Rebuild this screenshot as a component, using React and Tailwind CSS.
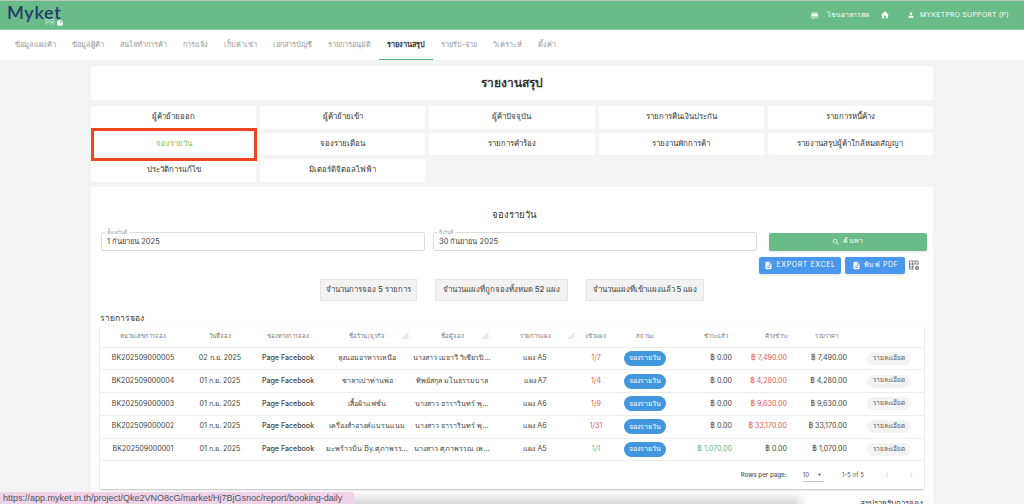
import { MdStore, MdHome, MdPerson, MdSearch, MdDescription, MdChevronLeft, MdChevronRight, MdArrowDropDown } from 'react-icons/md'

const tabs = ['ข้อมูลแผงค้า', 'ข้อมูลผู้ค้า', 'สนใจทำการค้า', 'การแจ้ง', 'เก็บค่าเช่า', 'เอกสารบัญชี', 'รายการอนุมัติ', 'รายงานสรุป', 'รายรับ-จ่าย', 'วิเคราะห์', 'ตั้งค่า']

const menu = [
  'ผู้ค้าย้ายออก', 'ผู้ค้าย้ายเข้า', 'ผู้ค้าปัจจุบัน', 'รายการคืนเงินประกัน', 'รายการหนี้ค้าง',
  'จองรายวัน', 'จองรายเดือน', 'รายการคำร้อง', 'รายงานพักการค้า', 'รายงานสรุปผู้ค้าใกล้หมดสัญญา',
  'ประวัติการแก้ไข', 'มิเตอร์ดิจิตอลไฟฟ้า',
]

const rows = [
  { id: 'BK202509000005', date: '02 ก.ย. 2025', shop: 'ลุงนอมอาหารเหนือ', name: 'นางสาว เมธาวี วิเชียรปิ...', zone: 'แผง A5', stall: '1/7', paid: '0.00', owing: '7,490.00', total: '7,490.00' },
  { id: 'BK202509000004', date: '01 ก.ย. 2025', shop: 'ชาลาเปาท่านพ่อ', name: 'ทิพย์สกุล มโนธรรมบาล', zone: 'แผง A7', stall: '1/4', paid: '0.00', owing: '4,280.00', total: '4,280.00' },
  { id: 'BK202509000003', date: '01 ก.ย. 2025', shop: 'เสื้อผ้าแฟชั่น', name: 'นางสาว ธารารินทร์ พุ...', zone: 'แผง A6', stall: '1/9', paid: '0.00', owing: '9,630.00', total: '9,630.00' },
  { id: 'BK202509000002', date: '01 ก.ย. 2025', shop: 'เครื่องสำอางค์แบรนแนม', name: 'นางสาว ธารารินทร์ พุ...', zone: 'แผง A6', stall: '1/31', paid: '0.00', owing: '33,170.00', total: '33,170.00' },
  { id: 'BK202509000001', date: '01 ก.ย. 2025', shop: 'มะพร้าวปั่น By.ศุภาพรร...', name: 'นางสาว ศุภาพรรณ เพ...', zone: 'แผง A5', stall: '1/1', paid: '1,070.00', owing: '0.00', total: '1,070.00', done: true },
]

const cols = 'grid grid-cols-[86px_68px_68px_90px_80px_86px_36px_62px_56px_60px_60px_72px] items-center'

function Resize() {
  return (
    <svg width="7" height="7" viewBox="0 0 7 7" className="absolute right-[3px] top-1/2 -translate-y-1/2 text-gray-400">
      <path d="M0.5 6.5 L6.5 0.5 M3.5 6.5 L6.5 3.5" stroke="currentColor" strokeWidth="0.6" fill="none" />
    </svg>
  )
}

function Field({ label, value }) {
  return (
    <div className="relative flex-1 h-[19px] border border-[#dcdcdc] rounded-[2px] bg-white flex items-center pl-[5px] pt-[2px] text-[7.5px] text-[#444]">
      <span className="absolute -top-[4px] left-[3px] bg-white px-[2px] text-[5px] leading-[6px] text-gray-400">{label}</span>
      {value}
    </div>
  )
}

export default function App() {
  return (
    <div className="h-[504px] overflow-hidden relative bg-[#f4f4f4] font-['Inter','Noto_Sans','Liberation_Sans',sans-serif]">
      {/* top bar */}
      <div className="h-[30px] bg-[#69bb88] border-t border-[#b5c9bc] border-b border-b-[#8fcba5] flex items-center justify-between pl-[7px] pr-[15px]">
        <div className="relative w-[60px] h-[28px]">
          <span className="absolute left-0 top-[2px] text-[18px] leading-[18px] tracking-[0.7px] font-semibold text-[#243a6b] font-['Lato',sans-serif]">Myket</span>
          <span className="absolute left-[38px] top-[18px] flex items-center gap-[2px] text-[7.5px] leading-[7px] text-[#c5e4cf]">
            PR
            <svg width="6" height="6" viewBox="0 0 6 6"><path d="M3 0 A3 3 0 1 0 6 3 L3 3 Z" fill="#fff" /><path d="M3.6 0 A2.6 2.6 0 0 1 6 2.4 L3.6 2.4 Z" fill="#fff" /></svg>
          </span>
        </div>
        <div className="flex items-center text-white text-[6.8px]">
          <MdStore size={9} />
          <span className="ml-[8px]">โชนอาหารสด</span>
          <MdHome size={10} className="ml-[11px]" />
          <MdPerson size={8} className="ml-[17px]" />
          <span className="ml-[5px] tracking-[0.3px]">MYKETPRO SUPPORT (P)</span>
        </div>
      </div>

      {/* tabs */}
      <div className="h-[30px] bg-white flex pl-[7px]">
        {tabs.map(t => (
          <div key={t} className={`h-[30px] px-[8px] flex items-center text-[7.35px] whitespace-nowrap ${t === 'รายงานสรุป' ? 'font-semibold text-[#333] border-b border-[#4caf7a]' : 'text-[#999]'}`}>{t}</div>
        ))}
      </div>

      <div className="mx-[91px] w-[842px] pt-[6px]">
        <div className="h-[34px] bg-white rounded-[2px] flex items-center justify-center text-[12px] font-semibold text-[#333]">รายงานสรุป</div>

        <div className="grid grid-cols-5 gap-x-[4px] gap-y-[4px] mt-[6px]">
          {menu.map(m => (
            <div key={m} className={`relative h-[22.5px] bg-white rounded-[2px] flex items-center justify-center text-[7.8px] font-medium ${m === 'จองรายวัน' ? 'text-[#8cc152]' : 'text-[#333]'}`}>
              {m}
              {m === 'จองรายวัน' && <div className="absolute -top-[5px] -bottom-[6px] left-0 -right-[1px] z-10 border-[3.5px] border-[#ef4423]" />}
            </div>
          ))}
        </div>

        {/* daily booking */}
        <div className="mt-[5px] h-[340px] bg-white rounded-[2px] pl-[10px] pr-[6px] relative">
          <div className="pt-[21px] text-center text-[9.5px] font-medium text-[#333] leading-[13px]">จองรายวัน</div>

          <div className="flex mt-[11px] gap-[8px]">
            <div className="flex gap-[8px] w-[656px]">
              <Field label="ตั้งแต่วันที่" value="1 กันยายน 2025" />
              <Field label="ถึงวันที่" value="30 กันยายน 2025" />
            </div>
            <div className="ml-[4px] mt-[1px] w-[158px] h-[18px] bg-[#69bb88] rounded-[2px] shadow-sm flex items-center justify-center gap-[3px] text-white text-[7px] tracking-[0.4px]">
              <MdSearch size={8} /> ค้นหา
            </div>
          </div>

          <div className="flex justify-end items-center mt-[6px] gap-[4px] pr-[7px]">
            <div className="h-[17px] w-[82px] bg-[#4a97ee] rounded-[2px] shadow-sm flex items-center justify-center gap-[3px] text-white text-[7px] tracking-[0.6px]">
              <MdDescription size={9} /> EXPORT EXCEL
            </div>
            <div className="h-[17px] w-[60px] bg-[#4a97ee] rounded-[2px] shadow-sm flex items-center justify-center gap-[3px] text-white text-[7px] tracking-[0.5px]">
              <MdDescription size={9} /> พิมพ์ PDF
            </div>
            <svg width="11" height="11" viewBox="0 0 11 11" className="text-gray-500">
              <path d="M0.5 1h8.5v4M0.5 1v8h4.5M0.5 4h8.5M0.5 6.8h4.5M3.4 1v8M6.2 1v3" stroke="currentColor" strokeWidth="0.8" fill="none" />
              <circle cx="8" cy="8" r="2" fill="currentColor" />
              <circle cx="8" cy="8" r="0.7" fill="#fff" />
            </svg>
          </div>

          <div className="h-[22px] mt-[5px] flex pl-[219px] text-[7.8px] font-medium text-[#444]">
            <div className="w-[97px] bg-[#f3f3f3] border border-[#e5e5e5] flex items-center justify-center">จำนวนการจอง 5 รายการ</div>
            <div className="w-[133px] ml-[18px] bg-[#f3f3f3] border border-[#e5e5e5] flex items-center justify-center">จำนวนแผงที่ถูกจองทั้งหมด 52 แผง</div>
            <div className="w-[118px] ml-[18px] bg-[#f3f3f3] border border-[#e5e5e5] flex items-center justify-center">จำนวนแผงที่เข้าแผงแล้ว 5 แผง</div>
          </div>

          <div className="mt-[11px] -ml-[1px] text-[8.5px] font-medium text-[#333] leading-[12px]">รายการจอง</div>

          {/* table */}
          <div className="mt-[1px] -ml-[1px] w-[824px] h-[164px] bg-white rounded-[2px] shadow-[0_1px_2px_rgba(0,0,0,0.25)]">
            <div className={`${cols} h-[23px] border-b border-[#eee] text-[6px] text-[#777] text-center`}>
              <div>หมายเลขการจอง</div>
              <div>วันที่จอง</div>
              <div>ช่องทางการจอง</div>
              <div className="relative h-full flex items-center justify-center">ชื่อร้าน/ธุรกิจ<Resize /></div>
              <div className="relative h-full flex items-center justify-center">ชื่อผู้จอง<Resize /></div>
              <div className="relative h-full flex items-center justify-center">รายการแผง<Resize /></div>
              <div>เข้าแผง</div>
              <div>สถานะ</div>
              <div className="text-right pr-[4px]">ชำระแล้ว</div>
              <div className="text-right pr-[4px]">ค้างชำระ</div>
              <div className="text-right pr-[14px]">รวมราคา</div>
              <div />
            </div>
            {rows.map(r => (
              <div key={r.id} className={`${cols} h-[22.8px] border-b border-[#eee] text-[7.1px] text-[#444] text-center whitespace-nowrap`}>
                <div>{r.id}</div>
                <div>{r.date}</div>
                <div className="font-medium">Page Facebook</div>
                <div>{r.shop}</div>
                <div>{r.name}</div>
                <div>{r.zone}</div>
                <div className={r.done ? 'text-[#6fb56f]' : 'text-[#e8574e]'}>{r.stall}</div>
                <div className="flex justify-center">
                  <span className="w-[42px] h-[15px] rounded-full bg-[#4197dd] text-white text-[7px] flex items-center justify-center">จองรายวัน</span>
                </div>
                <div className={`text-right ${r.done ? 'text-[#6fb56f]' : ''}`}>฿ {r.paid}</div>
                <div className={`text-right pr-[5px] ${r.done ? '' : 'text-[#e8574e]'}`}>฿ {r.owing}</div>
                <div className="text-right pr-[5px]">฿ {r.total}</div>
                <div className="flex justify-end pr-[13px]">
                  <span className="w-[44px] h-[13px] rounded-full bg-[#f3f3f3] text-[6.5px] text-[#555] flex items-center justify-center">รายละเอียด</span>
                </div>
              </div>
            ))}
            <div className="h-[27px] flex items-center justify-end text-[6.2px] text-[#555] pr-[8px]">
              <span className="font-medium">Rows per page:</span>
              <span className="ml-[16px] w-[21px] h-[14px] border-b border-[#ccc] flex items-center justify-between">10 <MdArrowDropDown size={9} /></span>
              <span className="ml-[18px]">1-5 of 5</span>
              <MdChevronLeft size={10} className="ml-[18px] text-gray-300" />
              <MdChevronRight size={10} className="ml-[14px] text-gray-300" />
            </div>
          </div>

          <div className="absolute right-[10px] top-[310px] text-[8px] font-medium text-[#333]">สรุปรายรับการจอง</div>
        </div>
      </div>

      {/* shadow + link preview from the browser */}
      <div className="absolute left-0 -bottom-[8px] w-[800px] h-[14px] bg-[#d4d4d4] blur-[5px]" />
      <div className="absolute left-0 bottom-0 w-[354px] h-[12px] bg-[#f0d3e6] rounded-tr-[3px] text-[9px] leading-[12px] pl-[3px] text-[#4a5568] font-['Liberation_Sans',sans-serif] whitespace-nowrap">
        https://app.myket.in.th/project/Qke2VNO8cG/market/Hj7BjGsnoc/report/booking-daily
      </div>
    </div>
  )
}
